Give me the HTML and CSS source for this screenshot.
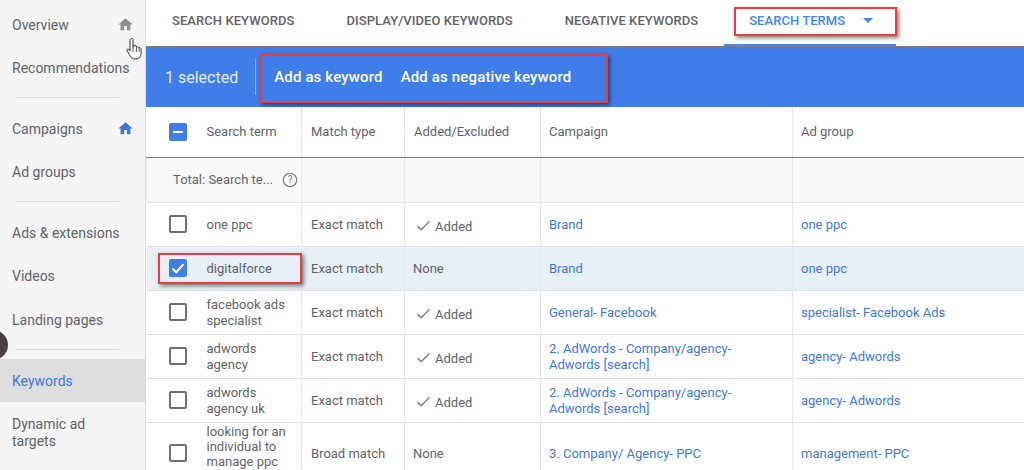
FILE: index.html
```html
<!DOCTYPE html>
<html lang="en">
<head>
<meta charset="utf-8">
<title>Search terms</title>
<link rel="stylesheet" href="styles.css">
</head>
<body>
<div class="page">
  <nav class="side">
    <div class="group">
      <div class="item"><span>Overview</span><svg class="home" viewBox="0 0 24 24"><path fill="#8f8f8f" d="M10 20v-6h4v6h5v-8h3L12 3 2 12h3v8z"/></svg></div>
      <div class="item"><span>Recommendations</span></div>
    </div>
    <div class="group">
      <div class="item"><span>Campaigns</span><svg class="home" viewBox="0 0 24 24"><path fill="#3f78d8" d="M10 20v-6h4v6h5v-8h3L12 3 2 12h3v8z"/></svg></div>
      <div class="item"><span>Ad groups</span></div>
    </div>
    <div class="group">
      <div class="item"><span>Ads &amp; extensions</span></div>
      <div class="item"><span>Videos</span></div>
      <div class="item"><span>Landing pages</span></div>
    </div>
    <div class="group last">
      <div class="item active"><span>Keywords</span></div>
      <div class="item two"><span>Dynamic ad targets</span></div>
    </div>
  </nav>
  <main class="main">
    <div class="tabs">
      <div class="tab">SEARCH KEYWORDS</div>
      <div class="tab">DISPLAY/VIDEO KEYWORDS</div>
      <div class="tab">NEGATIVE KEYWORDS</div>
      <div class="tab current">SEARCH TERMS<span class="caret"></span></div>
    </div>
    <div class="bar">
      <span class="count">1 selected</span>
      <span class="sep"></span>
      <span class="act">Add as keyword</span>
      <span class="act second">Add as negative keyword</span>
    </div>
    <table class="grid">
      <colgroup><col class="c1"><col class="c2"><col class="c3"><col class="c4"><col class="c5"><col class="c6"></colgroup>
      <thead>
        <tr class="head">
          <th class="box"><span class="cb mixed"></span></th>
          <th>Search term</th><th>Match type</th><th>Added/Excluded</th><th>Campaign</th><th>Ad group</th>
        </tr>
      </thead>
      <tbody>
        <tr class="total">
          <td colspan="2"><div class="total-cell">Total: Search te...<svg class="help" viewBox="0 0 16 16"><circle cx="8" cy="8" r="6.7" fill="none" stroke="#777" stroke-width="1.1"/><text x="8" y="11.2" text-anchor="middle" class="qm">?</text></svg></div></td>
          <td></td><td></td><td></td><td></td>
        </tr>
        <tr>
          <td class="box"><span class="cb"></span></td><td class="term">one ppc</td><td>Exact match</td>
          <td class="status"><svg class="tick" viewBox="0 0 16 12"><path d="M1.5 6.5l4 4 9-9" fill="none" stroke="#666" stroke-width="1.3"/></svg>Added</td>
          <td><a>Brand</a></td><td><a>one ppc</a></td>
        </tr>
        <tr class="sel">
          <td class="box"><span class="cb on"><svg viewBox="0 0 18 18"><path d="M3.5 9.500l3.700 3.700 7.300-8" fill="none" stroke="#fff" stroke-width="2"/></svg></span></td><td class="term">digitalforce</td><td>Exact match</td>
          <td>None</td><td><a>Brand</a></td><td><a>one ppc</a></td>
        </tr>
        <tr>
          <td class="box"><span class="cb"></span></td><td class="term">facebook ads specialist</td><td>Exact match</td>
          <td class="status"><svg class="tick" viewBox="0 0 16 12"><path d="M1.5 6.5l4 4 9-9" fill="none" stroke="#666" stroke-width="1.3"/></svg>Added</td>
          <td><a>General- Facebook</a></td><td><a>specialist- Facebook Ads</a></td>
        </tr>
        <tr class="low">
          <td class="box"><span class="cb"></span></td><td class="term">adwords agency</td><td>Exact match</td>
          <td class="status"><svg class="tick" viewBox="0 0 16 12"><path d="M1.5 6.5l4 4 9-9" fill="none" stroke="#666" stroke-width="1.3"/></svg>Added</td>
          <td><a>2. AdWords - Company/agency- Adwords [search]</a></td><td><a>agency- Adwords</a></td>
        </tr>
        <tr class="low">
          <td class="box"><span class="cb"></span></td><td class="term">adwords agency uk</td><td>Exact match</td>
          <td class="status"><svg class="tick" viewBox="0 0 16 12"><path d="M1.5 6.5l4 4 9-9" fill="none" stroke="#666" stroke-width="1.3"/></svg>Added</td>
          <td><a>2. AdWords - Company/agency- Adwords [search]</a></td><td><a>agency- Adwords</a></td>
        </tr>
        <tr class="tall">
          <td class="box"><span class="cb"></span></td><td class="term">looking for an individual to manage ppc</td><td>Broad match</td>
          <td>None</td><td><a>3. Company/ Agency- PPC</a></td><td><a>management- PPC</a></td>
        </tr>
      </tbody>
    </table>
  </main>
  <div class="mark mark-tab"></div>
  <div class="mark mark-actions"></div>
  <div class="mark mark-row"></div>
  <div class="dot"></div>
  <svg class="cursor" viewBox="0 0 18 24"><path d="M5.5 1.5c1 0 1.5.7 1.5 1.6V10l1-.2V8.500c1.500-.6 2.300 0 2.400 1l.1.400c1.200-.6 2.200 0 2.300 1 1.300-.5 2.300.1 2.300 1.300v4.300c0 3-2 5.500-5.500 5.500-3 0-4.500-1.300-5.700-3.500L1 13.500c-.6-1.200.8-2.100 1.800-1.100L4 14V3.100c0-.9.6-1.600 1.500-1.600z" fill="#fff" stroke="#333" stroke-width="1"/><path d="M7 10v5M10.400 10v5M13.200 11v4" stroke="#333" stroke-width=".8" fill="none"/></svg>
</div>
</body>
</html>
```
FILE: styles.css
```css
* { box-sizing: border-box; }
html, body { margin: 0; padding: 0; }
body { font-family: Roboto, "Liberation Sans", sans-serif; color: #5f6368; background: #fff; }
.page { position: relative; display: flex; width: 1024px; height: 470px; overflow: hidden; }

.side { flex: 0 0 146px; height: 470px; background: #f5f5f5; border-right: 1px solid #dcdcdc; padding-top: 3px; }
.group { padding-bottom: 8px; margin-bottom: 9px; position: relative; }
.group::after { content: ""; position: absolute; left: 16px; right: 26px; bottom: 0; height: 1px; background: #dadada; }
.group.last { padding: 0; margin: 0; }
.group.last::after { display: none; }
.item { display: flex; align-items: center; justify-content: space-between; height: 43.5px; padding: 0 11px 0 12px; font-size: 14px; color: #5f6368; white-space: nowrap; }
.item.active { color: #3f78e0; background: #dedede; padding-top: 1px; }
.item.two { white-space: normal; line-height: 17px; height: 54px; padding-top: 8px; padding-right: 40px; }
.home { width: 17px; height: 17px; flex: none; }

.main { flex: 1; min-width: 0; display: flex; flex-direction: column; }
.tabs { display: flex; flex: none; height: 47px; padding-left: 26px; border-bottom: 1px solid #7f7f7f; }
.tab { padding-top: 13px; margin-right: 52px; color: #5f6368; white-space: nowrap; font-size: 13px; font-weight: 500; letter-spacing: .06px; }
.tab:nth-child(3) { margin-right: 26px; }
.tab.current { color: #4285f4; margin: 0; width: 172px; padding-left: 25px; border-bottom: 2px solid #4285f4; height: 46px; }
.caret { display: inline-block; margin-left: 18px; vertical-align: 2px; width: 0; height: 0; border-style: solid; border-color: #4285f4 transparent transparent; border-width: 5px 5.5px 0; }

.bar { display: flex; flex: none; align-items: center; height: 60px; background: #3f7de8; color: #fff; padding-left: 19px; }
.count { color: #e3ecfc; font-size: 16px; }
.sep { width: 1px; height: 36px; background: #8fb3f2; margin: 0 18px 0 17px; }
.act { font-weight: 500; font-size: 15px; letter-spacing: .15px; }
.act.second { margin-left: 18px; }

.grid { flex: none; width: 878px; border-collapse: collapse; table-layout: fixed; font-size: 13px; line-height: 16px; }
.c1 { width: 49px; } .c2 { width: 106px; } .c3 { width: 103px; } .c4 { width: 136px; } .c5 { width: 252px; } .c6 { width: 232px; }
.grid th { font-weight: 400; text-align: left; color: #5f6368; height: 50px; padding: 0 10px 0 8px; border-bottom: 1px solid #777; }
.grid td { height: 44px; padding: 1px 10px 0 8px; border-top: 1px solid #e0e0e0; border-left: 1px solid #e8e8e8; color: #5f6368; vertical-align: middle; }
.grid th + th { border-left: 1px solid #e8e8e8; }
.grid th:nth-child(2) { border-left: 0; padding-left: 11px; }
.grid th:nth-child(3), .grid th:nth-child(4), .grid td:nth-child(3) { padding-left: 9px; }
.grid td.term { border-left: 0; padding-left: 11px; padding-right: 6px; }
.grid td.box, .grid th.box { border-left: 0; padding: 0 0 0 22px; }
.grid td a { color: #3f78d8; }
.grid tr.total td { background: #f8f8f8; height: 45px; border-top: 0; }
.total-cell { display: flex; align-items: center; padding-left: 26px; margin-left: -8px; white-space: nowrap; }
.help { width: 16px; height: 16px; margin-left: 9px; flex: none; }
.qm { font: 10px Roboto, sans-serif; fill: #777; }
.grid tr.sel td { background: #e8f0f7; }
.grid td.status { padding-top: 5px; }
.grid tr.low td { padding-top: 2px; }
.grid tr.low td.box { padding-top: 0; }
.grid tr.low td.status { padding-top: 6px; }
.grid tr.tall td { height: 62px; }
.grid tr.tall td.term { vertical-align: top; padding-top: 1px; line-height: 15px; }
.tick { width: 15px; height: 11px; margin: 0 4px 0 3px; }
.cb { display: block; width: 18px; height: 18px; border: 2px solid #707070; border-radius: 2px; background: #fff; position: relative; }
.cb.on, .cb.mixed { background: #3f7de8; border-color: #3f7de8; }
.cb.on svg { position: absolute; left: -2px; top: -2px; width: 18px; height: 18px; }
.cb.mixed::after { content: ""; position: absolute; left: 2px; right: 2px; top: 6px; height: 2px; background: #fff; }

.mark { position: absolute; border: 2px solid #ee3b3b; box-shadow: 2px 2px 4px rgba(0,0,0,.5); }
.mark-tab { left: 734px; top: 7px; width: 163px; height: 29px; }
.mark-actions { left: 260px; top: 54px; width: 348px; height: 49px; }
.mark-row { left: 158px; top: 253px; width: 144px; height: 31px; }
.dot { position: absolute; left: -22px; top: 330px; width: 30px; height: 30px; border-radius: 50%; background: #4a3f47; }
.cursor { position: absolute; left: 126px; top: 37px; width: 18px; height: 24px; }
```
